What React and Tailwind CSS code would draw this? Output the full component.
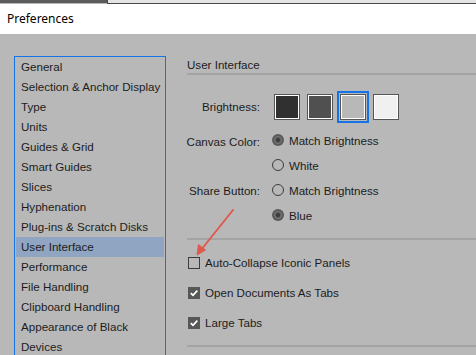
import React from "react";

const items = [
  "General",
  "Selection & Anchor Display",
  "Type",
  "Units",
  "Guides & Grid",
  "Smart Guides",
  "Slices",
  "Hyphenation",
  "Plug-ins & Scratch Disks",
  "User Interface",
  "Performance",
  "File Handling",
  "Clipboard Handling",
  "Appearance of Black",
  "Devices",
];

function Radio({ on }) {
  return on ? (
    <span className="w-[12px] h-[12px] rounded-full bg-[#5a5a5a] flex items-center justify-center shrink-0">
      <span className="w-[8px] h-[8px] rounded-full border border-[#7a7a7a] flex items-center justify-center">
        <span className="w-[4px] h-[4px] rounded-full bg-[#3c3c3c]" />
      </span>
    </span>
  ) : (
    <span className="w-[12px] h-[12px] rounded-full border border-[#3c3c3c] shrink-0" />
  );
}

function Check({ on }) {
  return on ? (
    <span className="w-[12px] h-[12px] bg-[#575757] flex items-center justify-center shrink-0">
      <svg width="10" height="10" viewBox="0 0 10 10">
        <path d="M1.8 5.2 L4 7.3 L8.3 2.6" fill="none" stroke="#ffffff" strokeWidth="1.8" />
      </svg>
    </span>
  ) : (
    <span className="w-[12px] h-[12px] border border-[#3c3c3c] shrink-0" />
  );
}

function Swatch({ fill, selected }) {
  return (
    <div
      className={
        "w-[26px] h-[26px] border border-[#555555] shadow-[inset_0_0_0_1px_#ffffff] " +
        fill +
        (selected ? " outline-2 outline-solid outline-[#1473e6] outline-offset-1" : "")
      }
    />
  );
}

export default function App() {
  return (
    <div
      className="relative w-[476px] h-[355px] overflow-hidden bg-[#b8b8b8] text-[#1c1c1c] text-[11.6px]"
      style={{ fontFamily: '"Liberation Sans", Arial, sans-serif' }}
    >
      <div className="flex h-[4px]">
        <div className="w-[107px] h-[3px] bg-[#5c5c5c]" />
        <div className="flex-1 h-[4px] border-l border-b border-[#4a4a4a] bg-[#e4e4e4]" />
      </div>
      <div
        className="h-[30px] bg-white flex items-center pl-[7px] text-[12px] text-black"
        style={{ fontFamily: '"Noto Sans", "Open Sans", sans-serif' }}
      >
        Preferences
      </div>
      <div className="flex">
        <div className="ml-[14px] mt-[22px] w-[152px] h-[320px] border border-[#1473e6] p-[1px] pt-0 shrink-0">
          {items.map((it) => (
            <div
              key={it}
              className={
                "h-[20px] flex items-center pl-[5px] whitespace-nowrap " +
                (it === "User Interface" ? "bg-[#8fa5c1]" : "")
              }
            >
              {it}
            </div>
          ))}
        </div>
        <div className="ml-[21px] flex-1 flex flex-col">
          <div className="mt-[23px] h-[16px] leading-[16px]">User Interface</div>
          <div className="h-[2px] bg-[#a4a4a4]" />
          <div className="mt-[19px] grid grid-cols-[73px_1fr] gap-x-[12px] items-center">
            <div className="flex justify-end whitespace-nowrap">Brightness:</div>
            <div className="flex gap-[7px] ml-[2px]">
              <Swatch fill="bg-[#303030]" />
              <Swatch fill="bg-[#505050]" />
              <Swatch fill="bg-[#b8b8b8]" selected />
              <Swatch fill="bg-[#f0f0f0]" />
            </div>
          </div>
          <div className="mt-[8px] grid grid-cols-[73px_1fr] gap-x-[12px] auto-rows-[25px] items-center">
            <div className="flex justify-end whitespace-nowrap pt-[3px]">Canvas Color:</div>
            <div className="flex items-center gap-[5px]">
              <Radio on />
              <span>Match Brightness</span>
            </div>
            <div />
            <div className="flex items-center gap-[5px]">
              <Radio />
              <span>White</span>
            </div>
            <div className="flex justify-end whitespace-nowrap pt-[1px]">Share Button:</div>
            <div className="flex items-center gap-[5px]">
              <Radio />
              <span>Match Brightness</span>
            </div>
            <div />
            <div className="flex items-center gap-[5px]">
              <Radio on />
              <span>Blue</span>
            </div>
          </div>
          <div className="mt-[10px] h-[2px] bg-[#a4a4a4]" />
          <div className="mt-[8px] flex flex-col pl-[1px]">
            {[
              ["Auto-Collapse Iconic Panels", false],
              ["Open Documents As Tabs", true],
              ["Large Tabs", true],
            ].map(([t, on]) => (
              <div key={t} className="h-[30px] flex items-center gap-[5px]">
                <Check on={on} />
                <span>{t}</span>
              </div>
            ))}
          </div>
          <div className="mt-[7px] h-[2px] bg-[#a4a4a4]" />
        </div>
      </div>
      <svg className="absolute left-0 top-0 pointer-events-none" width="476" height="355">
        <line x1="233" y1="210" x2="201" y2="250" stroke="#df5a4c" strokeWidth="2" strokeLinecap="round" />
        <path d="M197 255 L198.5 244.5 L205.5 250 Z" fill="#df5a4c" stroke="#df5a4c" strokeWidth="1" strokeLinejoin="round" />
      </svg>
    </div>
  );
}
